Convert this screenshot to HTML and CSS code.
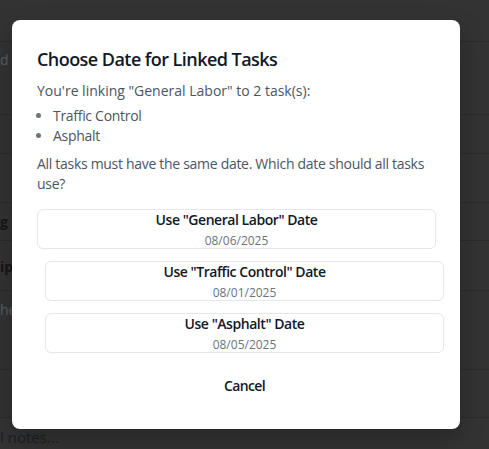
FILE: index.html
```html
<!DOCTYPE html>
<html lang="en">
<head>
<meta charset="utf-8">
<title>Choose Date for Linked Tasks</title>
<link rel="stylesheet" href="styles.css">
</head>
<body>
<div class="page">
  <div class="row r1"></div>
  <div class="row r2"><span class="frag muted">d</span></div>
  <div class="row r3"></div>
  <div class="row r4"></div>
  <div class="row r5"><span class="frag strong">g</span></div>
  <div class="row r6"><span class="frag strong">ipt</span></div>
  <div class="row r7"><span class="frag muted">he</span></div>
  <div class="row r8"></div>
  <div class="row r9"><span class="frag dark">l notes...</span></div>
</div>

<div class="modal" role="dialog" aria-labelledby="dlg-title">
  <h2 id="dlg-title" class="title">Choose Date for Linked Tasks</h2>
  <p class="text intro">You're linking "General Labor" to 2 task(s):</p>
  <ul class="tasks">
    <li>Traffic Control</li>
    <li>Asphalt</li>
  </ul>
  <p class="text question">All tasks must have the same date. Which date should all tasks use?</p>
  <div class="choices">
    <button class="choice">
      <span class="choice-title">Use "General Labor" Date</span>
      <span class="choice-date">08/06/2025</span>
    </button>
    <button class="choice shifted">
      <span class="choice-title">Use "Traffic Control" Date</span>
      <span class="choice-date">08/01/2025</span>
    </button>
    <button class="choice shifted">
      <span class="choice-title">Use "Asphalt" Date</span>
      <span class="choice-date">08/05/2025</span>
    </button>
    <button class="cancel shifted">Cancel</button>
  </div>
</div>
</body>
</html>
```

FILE: styles.css
```css
* { box-sizing: border-box; }

html, body {
  margin: 0;
  padding: 0;
}

body {
  background: #333333;
  font-family: "Segoe UI", "Open Sans", "Noto Sans", sans-serif;
  height: 449px;
  overflow: hidden;
  position: relative;
}

/* dimmed page behind the dialog */
.page {
  display: flex;
  flex-direction: column;
}

.row {
  border-bottom: 1px solid #2b2b2b;
  font-size: 14px;
  line-height: 20px;
  white-space: nowrap;
}

.r1 { height: 42px; }
.r2 { height: 73px; padding-top: 8px; }
.r3 { height: 39px; }
.r4 { height: 49px; }
.r5 { height: 38px; padding-top: 9px; }
.r6 { height: 50px; padding-top: 16px; }
.r7 { height: 79px; padding-top: 9px; }
.r8 { height: 48px; }
.r9 { height: 40px; padding-top: 9px; border-bottom: none; }

.frag { display: inline-block; }
.muted { color: #5e5e5e; }
.strong { color: #141619; font-weight: 700; }
.dark { color: #1b1f24; font-size: 15px; }

/* dialog */
.modal {
  position: absolute;
  left: 12px;
  top: 20px;
  width: 448px;
  background: #ffffff;
  border-radius: 8px;
  padding: 24px 24px 25px 25px;
  box-shadow: 0 10px 25px rgba(0, 0, 0, 0.25);
}

.title {
  margin: 0 0 9px;
  padding-top: 2px;
  height: 28px;
  font-size: 18px;
  line-height: 26px;
  font-weight: 600;
  letter-spacing: -0.55px;
  color: #111827;
}

.text {
  margin: 0;
  font-size: 14px;
  line-height: 20px;
  letter-spacing: -0.3px;
  color: #4b5563;
}

.intro { margin-bottom: 5px; letter-spacing: 0; }

.tasks {
  margin: 0 0 8px;
  padding-left: 16px;
  font-size: 14px;
  line-height: 20px;
  letter-spacing: -0.3px;
  color: #4b5563;
  list-style: disc;
}

.tasks li::marker { color: #6b7280; }

.question { margin-bottom: 15px; }

.choices {
  display: flex;
  flex-direction: column;
  align-items: flex-start;
  gap: 12px;
}

.choice {
  width: 100%;
  height: 40px;
  margin: 0;
  padding: 0;
  border: 1px solid #e5e7eb;
  border-radius: 6px;
  background: #ffffff;
  font-family: inherit;
  display: flex;
  flex-direction: column;
  align-items: center;
  justify-content: flex-start;
  overflow: visible;
  cursor: pointer;
}

.shifted { margin-left: 8px; }

.choice-title {
  display: block;
  font-size: 14px;
  line-height: 20px;
  font-weight: 600;
  letter-spacing: -0.45px;
  color: #111827;
}

.choice-date {
  display: block;
  margin-top: 3px;
  font-size: 12px;
  line-height: 16px;
  color: #6b7280;
}

.cancel {
  width: 100%;
  margin-top: 3px;
  padding: 8px 0;
  border: none;
  background: transparent;
  font-family: inherit;
  font-size: 14px;
  line-height: 20px;
  font-weight: 600;
  letter-spacing: -0.6px;
  color: #111827;
  cursor: pointer;
}
```
